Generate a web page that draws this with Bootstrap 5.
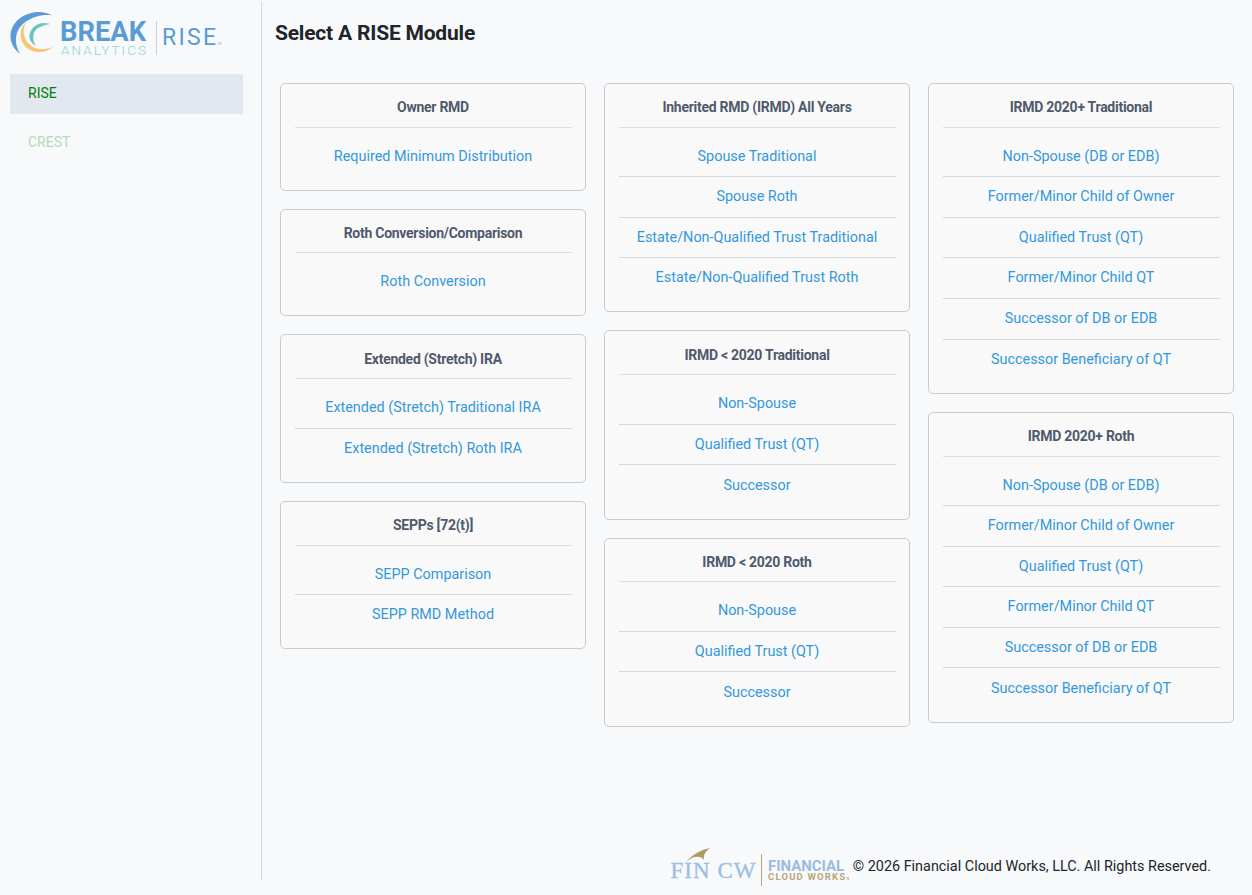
<!DOCTYPE html>
<html lang="en">
<head>
<meta charset="utf-8">
<title>Select A RISE Module</title>
<link href="https://cdn.jsdelivr.net/npm/bootstrap@5.3.0/dist/css/bootstrap.min.css" rel="stylesheet">
<style>
html,body{height:100%}
body{background:#f7f9fb;font-family:Roboto,"Liberation Sans",sans-serif;font-size:14.4px;color:#212529;overflow:hidden}
.app-shell{height:878px;margin-top:2px}
.side-rail{width:262px;flex:none;border-right:1px solid #d5d9de;padding:0 18px 0 10px}
.brand-art{display:block;margin-top:6px;margin-bottom:13px}
.rail-link{display:block;height:40px;line-height:39px;padding-left:18px;margin-bottom:9px;color:#008000;text-decoration:none;font-size:14px}
.rail-link.is-on{background:#e2e8f0}
.rail-link.is-off{color:#b5d9b8}
.work-area{min-width:0}
.page-title{font-size:21px;font-weight:700;margin:18px 0 0 13px;line-height:26px;letter-spacing:-.2px;color:#212529}
.module-grid{display:grid;grid-template-columns:repeat(3,306px);column-gap:18px;padding:36.75px 0 0 18px;align-items:start}
.module-col{display:flex;flex-direction:column;gap:18px}
.module-box{background:#f9f9fa;border:1px solid #c9cccf;border-radius:5px;padding:0 14px 12.58px;text-align:center}
.module-head{font-size:14px;font-weight:700;color:#4f5a6c;height:43.8px;line-height:46.5px;padding-top:.5px;border-bottom:1px solid #dbe1e8;letter-spacing:-.27px;margin-right:-1px;padding-right:1px}
.module-list{margin-top:8.85px}
.module-list a{display:block;height:40.64px;line-height:40.7px;padding-top:.18px;color:#3498db;text-decoration:none;font-size:14.4px;border-bottom:1px solid #d5d9de;margin-right:-1px;padding-right:1px}
.module-list a:last-child{border-bottom:0}
.foot-line{margin-top:auto;font-size:14.4px;color:#212529;padding-right:41px}
.foot-art{margin:-6px 0}
</style>
</head>
<body>
<div class="app-shell d-flex">
  <aside class="side-rail">
    <svg class="brand-art" width="222" height="53" viewBox="10 8 222 53" xmlns="http://www.w3.org/2000/svg" role="img" aria-label="Break Analytics RISE">
      <path d="M52 15.500C44 10.500 30 10 19 19 7 29 8 45 20 54 14 44 14 31 24 23 33 16 44 14 52 15.500Z" fill="#5b9bd5"/>
      <path d="M26 22.500C19 28 19 39 25 46 31 53 45 55 53 46.500 45 51 35 50 29 44 23 38 22 30 26 22.500Z" fill="#fcc46f"/>
      <path d="M50 24C41 21 33 25 30 33 28 38 31 43 36 46 33 41 32 36 35 31 38 27 44 25 50 24Z" fill="#6cc5bb"/>
      <text x="60" y="41" font-family="Roboto,sans-serif" font-weight="700" font-size="28" fill="#5b9bd5" textLength="86" lengthAdjust="spacingAndGlyphs">BREAK</text>
      <text x="61" y="54.500" font-family="Roboto,sans-serif" font-weight="300" font-size="13.500" fill="#93d5cd" textLength="85" lengthAdjust="spacing">ANALYTICS</text>
      <rect x="156" y="21" width="1" height="34" fill="#c8d2da"/>
      <text x="162" y="45" font-family="Roboto,sans-serif" font-weight="400" font-size="23" fill="#5b9bd5" textLength="54" lengthAdjust="spacing">RISE</text>
      <text x="217" y="45" font-family="Roboto,sans-serif" font-size="3" fill="#8fb5dc">TM</text>
    </svg>
    <a class="rail-link is-on" href="#">RISE</a>
    <a class="rail-link is-off" href="#">CREST</a>
  </aside>
  <main class="work-area flex-grow-1 d-flex flex-column">
    <h1 class="page-title">Select A RISE Module</h1>
    <div class="module-grid">
      <div class="module-col">
        <section class="module-box"><div class="module-head">Owner RMD</div><div class="module-list"><a href="#">Required Minimum Distribution</a></div></section>
        <section class="module-box"><div class="module-head">Roth Conversion/Comparison</div><div class="module-list"><a href="#">Roth Conversion</a></div></section>
        <section class="module-box"><div class="module-head">Extended (Stretch) IRA</div><div class="module-list"><a href="#">Extended (Stretch) Traditional IRA</a><a href="#">Extended (Stretch) Roth IRA</a></div></section>
        <section class="module-box"><div class="module-head">SEPPs [72(t)]</div><div class="module-list"><a href="#">SEPP Comparison</a><a href="#">SEPP RMD Method</a></div></section>
      </div>
      <div class="module-col">
        <section class="module-box"><div class="module-head">Inherited RMD (IRMD) All Years</div><div class="module-list"><a href="#">Spouse Traditional</a><a href="#">Spouse Roth</a><a href="#">Estate/Non-Qualified Trust Traditional</a><a href="#">Estate/Non-Qualified Trust Roth</a></div></section>
        <section class="module-box"><div class="module-head">IRMD &lt; 2020 Traditional</div><div class="module-list"><a href="#">Non-Spouse</a><a href="#">Qualified Trust (QT)</a><a href="#">Successor</a></div></section>
        <section class="module-box"><div class="module-head">IRMD &lt; 2020 Roth</div><div class="module-list"><a href="#">Non-Spouse</a><a href="#">Qualified Trust (QT)</a><a href="#">Successor</a></div></section>
      </div>
      <div class="module-col">
        <section class="module-box"><div class="module-head">IRMD 2020+ Traditional</div><div class="module-list"><a href="#">Non-Spouse (DB or EDB)</a><a href="#">Former/Minor Child of Owner</a><a href="#">Qualified Trust (QT)</a><a href="#">Former/Minor Child QT</a><a href="#">Successor of DB or EDB</a><a href="#">Successor Beneficiary of QT</a></div></section>
        <section class="module-box"><div class="module-head">IRMD 2020+ Roth</div><div class="module-list"><a href="#">Non-Spouse (DB or EDB)</a><a href="#">Former/Minor Child of Owner</a><a href="#">Qualified Trust (QT)</a><a href="#">Former/Minor Child QT</a><a href="#">Successor of DB or EDB</a><a href="#">Successor Beneficiary of QT</a></div></section>
      </div>
    </div>
    <footer class="foot-line mt-auto d-flex justify-content-end align-items-center gap-1">
      <svg class="foot-art" width="184" height="38" viewBox="0 0 184 38" xmlns="http://www.w3.org/2000/svg" role="img" aria-label="Financial Cloud Works">
        <path d="M21 14C27 7 35 2 45 0 41 3 38 7 39 12 35 7 28 8 21 14Z" fill="#b09a6a"/>
        <text x="5.500" y="30" font-family="Liberation Serif,serif" font-size="23" fill="#9dbfe5" stroke="#9dbfe5" stroke-width=".35" textLength="85" lengthAdjust="spacing">FIN CW</text>
        <rect x="96" y="6" width="1" height="32" fill="#b9a578"/>
        <text x="103" y="23" font-family="Roboto,sans-serif" font-weight="700" font-size="14" fill="#9dbbe0" textLength="76" lengthAdjust="spacingAndGlyphs">FINANCIAL</text>
        <text x="103" y="32" font-family="Roboto,sans-serif" font-weight="700" font-size="9.500" fill="#b9a578" textLength="77" lengthAdjust="spacing">CLOUD WORKS</text>
        <text x="181" y="32" font-family="Roboto,sans-serif" font-size="3" fill="#8a7a55">TM</text>
      </svg>
      <span>© 2026 Financial Cloud Works, LLC. All Rights Reserved.</span>
    </footer>
  </main>
</div>
<script src="https://cdn.jsdelivr.net/npm/bootstrap@5.3.0/dist/js/bootstrap.bundle.min.js"></script>
</body>
</html>
